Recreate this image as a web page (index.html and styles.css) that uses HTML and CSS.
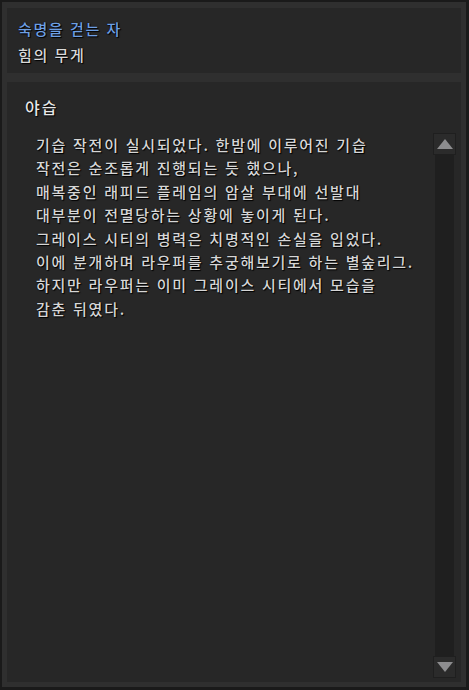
FILE: index.html
```html
<!DOCTYPE html>
<html lang="ko">
<head>
<meta charset="utf-8">
<link rel="stylesheet" href="styles.css">
</head>
<body>
<div class="window">
  <div class="frame">
    <header class="header">
      <div class="title">숙명을 걷는 자</div>
      <div class="subtitle">힘의 무게</div>
    </header>
    <section class="content">
      <div class="main">
        <h2 class="heading">야습</h2>
        <div class="body-row">
          <p class="text">기습 작전이 실시되었다. 한밤에 이루어진 기습<br>작전은 순조롭게 진행되는 듯 했으나,<br>매복중인 래피드 플레임의 암살 부대에 선발대<br>대부분이 전멸당하는 상황에 놓이게 된다.<br>그레이스 시티의 병력은 치명적인 손실을 입었다.<br>이에 분개하며 라우퍼를 추궁해보기로 하는 별숲리그.<br>하지만 라우퍼는 이미 그레이스 시티에서 모습을<br>감춘 뒤였다.</p>
          <div class="scrollbar">
            <div class="sb-btn"><svg width="16" height="10" viewBox="0 0 16 10"><polygon points="8,0 16,10 0,10" fill="#8c8c8e"/></svg></div>
            <div class="sb-track"></div>
            <div class="sb-btn"><svg width="16" height="10" viewBox="0 0 16 10"><polygon points="0,0 16,0 8,10" fill="#8c8c8e"/></svg></div>
          </div>
        </div>
      </div>
    </section>
  </div>
</div>
</body>
</html>
```

FILE: styles.css
```css
* { box-sizing: border-box; }
html, body {
  margin: 0;
  padding: 0;
  background: #1a1a1a;
}
body {
  width: 469px;
  height: 690px;
  overflow: hidden;
  font-family: "Noto Sans CJK KR", "Noto Sans", sans-serif;
}
.window {
  width: 469px;
  height: 690px;
  padding: 2px 3px 3px 2px;
  background: #1a1a1a;
}
.frame {
  height: 100%;
  background: #2f2f2f;
  padding: 6px 5px 5px 5px;
  display: flex;
  flex-direction: column;
  gap: 9px;
}
.header {
  height: 65px;
  background: #272727;
  padding: 8px 11px 0 11px;
  display: flex;
  flex-direction: column;
}
.title, .subtitle, .heading, .text {
  font-weight: 500;
  letter-spacing: 1.6px;
  text-shadow: 0 0 1px #000, 1px 1px 1px #000;
}
.title {
  color: #6e9fe3;
  font-size: 15px;
  line-height: 26px;
}
.subtitle {
  color: #dadada;
  font-size: 15px;
  line-height: 26px;
}
.content {
  flex: 1;
  background: #272727;
  display: flex;
  padding: 0 5px 4px 18px;
}
.main {
  flex: 1;
  display: flex;
  flex-direction: column;
}
.heading {
  margin: 0;
  padding-top: 13px;
  color: #e8e8e8;
  font-size: 16px;
  line-height: 24px;
  letter-spacing: 2px;
}
.body-row {
  flex: 1;
  display: flex;
  padding-top: 14px;
}
.text {
  flex: 1;
  margin: 0;
  padding: 0 0 0 11px;
  color: #d6d6d6;
  font-size: 15px;
  line-height: 23.4px;
  letter-spacing: 1.75px;
  white-space: nowrap;
}
.scrollbar {
  width: 23px;
  display: flex;
  flex-direction: column;
}
.sb-btn {
  height: 22px;
  background: #2b2b2b;
  border: 1px solid #1f1f1f;
  display: flex;
  align-items: center;
  justify-content: center;
}
.sb-track {
  flex: 1;
  margin: 0 2px;
  background: #1f1f1f;
}
```
